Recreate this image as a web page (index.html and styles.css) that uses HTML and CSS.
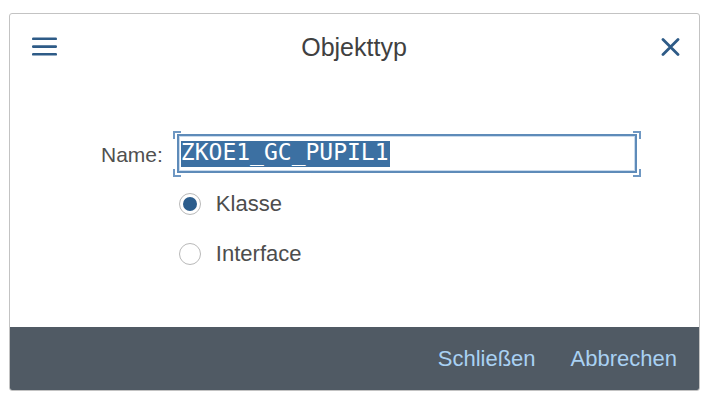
FILE: index.html
```html
<!DOCTYPE html>
<html lang="de">
<head>
<meta charset="utf-8">
<title>Objekttyp</title>
<link rel="stylesheet" href="styles.css">
</head>
<body>
<div class="dialog">
  <div class="header">
    <button class="icon-btn menu" aria-label="Menü">
      <svg width="25" height="19" viewBox="0 0 25 19"><rect x="0" y="0.5" width="25" height="2.6" rx="1.2"/><rect x="0" y="8.3" width="25" height="2.6" rx="1.2"/><rect x="0" y="16" width="25" height="2.6" rx="1.2"/></svg>
    </button>
    <div class="title">Objekttyp</div>
    <button class="icon-btn close" aria-label="Schließen">
      <svg width="19" height="18" viewBox="0 0 19 18"><path d="M2 1.5 L17 16.5 M17 1.5 L2 16.5" stroke-width="2.8" stroke-linecap="round"/></svg>
    </button>
  </div>
  <div class="content">
    <div class="form">
      <label class="label">Name:</label>
      <div class="field">
        <span class="corner tl"></span><span class="corner tr"></span><span class="corner bl"></span><span class="corner br"></span>
        <div class="input"><span class="sel">ZKOE1_GC_PUPIL1</span></div>
      </div>
      <div class="radios">
        <div class="radio-row"><span class="radio checked"></span><span class="radio-label">Klasse</span></div>
        <div class="radio-row"><span class="radio"></span><span class="radio-label">Interface</span></div>
      </div>
    </div>
  </div>
  <div class="footer">
    <button class="foot-btn">Schließen</button>
    <button class="foot-btn">Abbrechen</button>
  </div>
</div>
</body>
</html>
```

FILE: styles.css
```css
html, body {
  margin: 0;
  padding: 0;
  background: #ffffff;
}
body {
  font-family: "Liberation Sans", Arial, sans-serif;
  padding: 13px 0 0 9px;
}
.dialog {
  width: 691px;
  height: 378px;
  box-sizing: border-box;
  border: 1px solid #c3c3c3;
  border-radius: 3px;
  display: flex;
  flex-direction: column;
  background: #fff;
}
.header {
  height: 64px;
  display: grid;
  grid-template-columns: 1fr auto 1fr;
  align-items: center;
  padding: 0 19px 0 22px;
  flex: none;
}
.icon-btn {
  background: none;
  border: 0;
  padding: 0;
  display: flex;
  align-items: center;
}
.menu { justify-self: start; }
.close { justify-self: end; }
.menu svg { fill: #2e5b87; display: block; margin-top: 1px; }
.close svg { stroke: #2e5b87; display: block; margin-top: 1px; }
.title {
  font-size: 25px;
  color: #404040;
  margin-top: 2px;
  margin-right: 4px;
}
.content {
  flex: 1;
  padding: 53px 0 0 91px;
}
.form {
  display: grid;
  grid-template-columns: max-content 468px;
  justify-content: start;
  column-gap: 10px;
  align-items: center;
}
.label {
  font-size: 21px;
  color: #505050;
  margin-top: 2px;
}
.field {
  position: relative;
  padding: 3px 4px 4px 4px;
}
.corner {
  position: absolute;
  width: 6px;
  height: 6px;
  border: 0 solid #6f98c3;
}
.corner.tl { left: 0; top: 0; border-left-width: 2px; border-top-width: 2px; }
.corner.tr { right: 0; top: 0; border-right-width: 2px; border-top-width: 2px; }
.corner.bl { left: 0; bottom: 0; border-left-width: 2px; border-bottom-width: 2px; }
.corner.br { right: 0; bottom: 0; border-right-width: 2px; border-bottom-width: 2px; }
.input {
  height: 39px;
  box-sizing: border-box;
  border: 2px solid #5e8bb9;
  box-shadow: inset 0 0 0 1px #c9daec;
  display: flex;
  align-items: center;
  padding-left: 2px;
}
.sel {
  display: inline-block;
  height: 26px;
  font-family: "DejaVu Sans Mono", "Liberation Mono", monospace;
  font-size: 23px;
  line-height: 22px;
  background: #3c70a2;
  color: #ffffff;
  padding-right: 1px;
}
.radios {
  grid-column: 2;
  display: flex;
  flex-direction: column;
  padding-top: 2px;
}
.radio-row {
  height: 50px;
  display: flex;
  align-items: center;
  padding-left: 6px;
}
.radio {
  width: 22px;
  height: 22px;
  box-sizing: border-box;
  border: 1px solid #b9b9b9;
  border-radius: 50%;
  display: flex;
  align-items: center;
  justify-content: center;
  background: #fff;
}
.radio.checked::after {
  content: "";
  width: 14px;
  height: 14px;
  border-radius: 50%;
  background: #2c5d8d;
}
.radio-label {
  font-size: 22px;
  color: #4d4d4d;
  margin-left: 15px;
}
.footer {
  height: 63px;
  flex: none;
  background: #505a64;
  border-radius: 0 0 2px 2px;
  display: flex;
  justify-content: flex-end;
  align-items: center;
  gap: 35px;
  padding-right: 22px;
}
.foot-btn {
  background: none;
  border: 0;
  padding: 0;
  font-family: "Liberation Sans", Arial, sans-serif;
  font-size: 22px;
  color: #a9d1f3;
  margin-top: 1px;
}
```
